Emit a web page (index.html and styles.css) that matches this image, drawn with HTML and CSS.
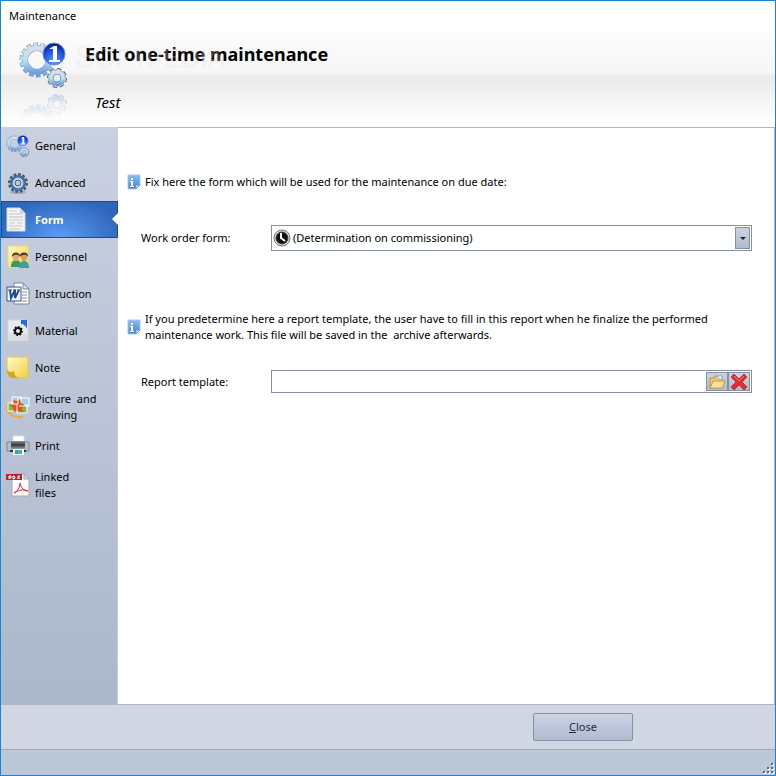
FILE: index.html
```html
<!DOCTYPE html>
<html lang="en">
<head>
  <meta charset="UTF-8" />
  <title>Maintenance</title>
  <link rel="stylesheet" href="styles.css">
</head>
<body>
  <!-- shared gradients and symbols -->
  <svg class="defs" width="0" height="0" aria-hidden="true">
    <defs>
      <linearGradient id="steel" x1="0" y1="0" x2="0" y2="1">
        <stop offset="0" stop-color="#d5deec"/>
        <stop offset=".55" stop-color="#b4e2f5"/>
        <stop offset="1" stop-color="#6fa2dc"/>
      </linearGradient>
      <radialGradient id="ball" cx=".5" cy=".85" r=".8">
        <stop offset="0" stop-color="#5a9cff"/>
        <stop offset=".6" stop-color="#2455e0"/>
        <stop offset="1" stop-color="#0a1fa8"/>
      </radialGradient>
      <linearGradient id="yellow" x1="0" y1="0" x2="1" y2="1">
        <stop offset="0" stop-color="#fffbc0"/>
        <stop offset="1" stop-color="#f2cf4a"/>
      </linearGradient>
      <linearGradient id="infoBlue" x1="0" y1="0" x2="0" y2="1">
        <stop offset="0" stop-color="#8dbcf5"/>
        <stop offset="1" stop-color="#3c82dc"/>
      </linearGradient>
      <linearGradient id="printer" x1="0" y1="0" x2="0" y2="1">
        <stop offset="0" stop-color="#8b9096"/>
        <stop offset=".5" stop-color="#34383d"/>
        <stop offset="1" stop-color="#9da2a8"/>
      </linearGradient>
      <symbol id="gears" viewBox="0 0 50 48">
        <circle cx="18" cy="19" r="15" fill="none" stroke="#7b90aa" stroke-width="5" pathLength="28" stroke-dasharray="1.3 .7"/>
        <circle cx="18" cy="19" r="12" fill="none" stroke="#7b90aa" stroke-width="6"/>
        <circle cx="18" cy="19" r="15" fill="none" stroke="url(#steel)" stroke-width="4" pathLength="28" stroke-dasharray="1 1" stroke-dashoffset="-.1"/>
        <circle cx="18" cy="19" r="12" fill="none" stroke="url(#steel)" stroke-width="5"/>
        <circle cx="38" cy="37" r="8" fill="none" stroke="#57687d" stroke-width="4" pathLength="16" stroke-dasharray="1.2 .8"/>
        <circle cx="38" cy="37" r="6" fill="none" stroke="#57687d" stroke-width="5"/>
        <circle cx="38" cy="37" r="7" fill="none" stroke="#c4d8ef" stroke-width="4" pathLength="16" stroke-dasharray="1 1" stroke-dashoffset="-.1"/>
        <circle cx="38" cy="37" r="6" fill="none" stroke="url(#steel)" stroke-width="4"/>
        <circle cx="35" cy="13" r="11" fill="url(#ball)" stroke="#6d8fe0" stroke-width="1"/>
        <path d="M30 8l5-3h3v14h3v2h-11v-2h4v-11h-4z" fill="#fff"/>
      </symbol>
      <symbol id="info" viewBox="0 0 14 16">
        <path d="M1 1h12v10l-4 4h-8z" fill="url(#infoBlue)" stroke="#aac8ee" stroke-width="1"/>
        <path d="M9 15v-4h4z" fill="#e8f2ff" stroke="#5b95dd" stroke-width="1"/>
        <path d="M4 4h2v2h-2zM3 7h3v5h1v1h-4v-1h1v-4h-1z" fill="#fff"/>
      </symbol>
    </defs>
  </svg>

  <div class="window">
    <div class="title-bar">Maintenance</div>

    <header class="banner">
      <div class="banner-icon">
        <svg class="gears" width="50" height="48"><use href="#gears"/></svg>
        <svg class="reflection" width="50" height="48"><use href="#gears"/></svg>
      </div>
      <div class="banner-text">
        <h1>Edit one-time maintenance</h1>
        <p>Test</p>
      </div>
      <span class="watermark"><big>S</big>OFTPEDIA<sup>®</sup></span>
    </header>

    <div class="middle">
      <nav class="sidebar">
        <a class="nav-item" href="#general">
          <svg width="24" height="24"><use href="#gears"/></svg>
          <span>General</span>
        </a>
        <a class="nav-item" href="#advanced">
          <svg width="24" height="24" viewBox="0 0 24 24">
            <ellipse cx="12" cy="21" rx="8" ry="2" fill="#7d899f" opacity=".5"/>
            <circle cx="12" cy="12" r="8" fill="none" stroke="#4b5969" stroke-width="4" pathLength="24" stroke-dasharray="1.2 .8"/>
            <circle cx="12" cy="12" r="8" fill="#5c6978"/>
            <circle cx="12" cy="12" r="6" fill="none" stroke="#2b78cc" stroke-width="2"/>
            <circle cx="12" cy="12" r="5" fill="#e4ebf2" stroke="#a3bfdb" stroke-width="1"/>
            <circle cx="12" cy="12" r="3" fill="#bcc7d8" stroke="#47525f" stroke-width="1"/>
          </svg>
          <span>Advanced</span>
        </a>
        <a class="nav-item active" href="#form">
          <svg width="24" height="26" viewBox="0 0 24 26">
            <path d="M1 1h13l5 5v18H1z" fill="#f4f4f2" stroke="#d4d8dd"/>
            <path d="M14 1v5h5z" fill="#cfd3d8"/>
            <path d="M3 4h8M3 7h14M3 13h14M3 16h6M11 16h6M3 19h14M3 22h11" stroke="#c3c7cb"/>
            <path d="M3 10h14" stroke="#d5d8dc" stroke-width="2"/>
          </svg>
          <span>Form</span>
        </a>
        <a class="nav-item" href="#personnel">
          <svg width="24" height="24" viewBox="0 0 24 24">
            <path d="M2 1h20v21H2z" fill="url(#yellow)" stroke="#e6d98c"/>
            <path d="M5 22c0-5 2-7 5-7s5 2 5 7z" fill="#3e9a5c"/>
            <ellipse cx="10" cy="12" rx="3" ry="4" fill="#e0a878"/>
            <path d="M6 12c-1-6 9-6 8 0-1-3-6-3-8 0z" fill="#5b3c22"/>
            <path d="M13 23c0-5 2-7 5-7s5 2 5 7z" fill="#3aa19c"/>
            <ellipse cx="18" cy="12" rx="3" ry="4" fill="#d99868"/>
            <path d="M14 12c-1-6 9-6 8 0-1-3-6-3-8 0z" fill="#4b3525"/>
          </svg>
          <span>Personnel</span>
        </a>
        <a class="nav-item" href="#instruction">
          <svg width="24" height="24" viewBox="0 0 24 24">
            <path d="M8 1h9l6 6v15H8z" fill="#fff" stroke="#7c838c"/>
            <path d="M17 1v6h6z" fill="#dde1e6" stroke="#7c838c"/>
            <path d="M16 10h5M16 13h5M16 16h5M16 19h5" stroke="#858c95"/>
            <path d="M1 5h14v14H1z" fill="#f5f8fd" stroke="#2b5797" stroke-width="1"/>
            <path d="M4 8l1 8 4-8v8l4-8" fill="none" stroke="#1f4c94" stroke-width="2"/>
            <path d="M2 8h4M7 8h3M11 8h3" stroke="#1f4c94"/>
          </svg>
          <span>Instruction</span>
        </a>
        <a class="nav-item" href="#material">
          <svg width="24" height="24" viewBox="0 0 24 24">
            <path d="M2 1h20v20H2z" fill="#e8eaed" stroke="#d3d7dd"/>
            <path d="M2 15h20v7H2z" fill="#d9dce0"/>
            <path d="M15 1h6v9c-1-3-3-5-6-5z" fill="#1d6fe0"/>
            <circle cx="12" cy="12" r="4" fill="none" stroke="#111" stroke-width="2" pathLength="16" stroke-dasharray="1 1"/>
            <circle cx="12" cy="12" r="3" fill="none" stroke="#111" stroke-width="2"/>
          </svg>
          <span>Material</span>
        </a>
        <a class="nav-item" href="#note">
          <svg width="24" height="24" viewBox="0 0 24 24">
            <path d="M1 1h21v21H10L1 14z" fill="url(#yellow)" stroke="#e3c64f"/>
            <path d="M1 14c2 3 5 2 7 1 0 3 1 5 4 7H6c-3-1-5-4-5-8z" fill="#d6a51c"/>
          </svg>
          <span>Note</span>
        </a>
        <a class="nav-item" href="#pictures">
          <svg width="24" height="24" viewBox="0 0 24 24">
            <path d="M1 9c-1 8 4 14 16 13" fill="none" stroke="#eea92c" stroke-width="2"/>
            <path d="M6 2h9v7H6zM14 3h9v8h-9z" fill="#9bd2ef" stroke="#fff"/>
            <path d="M2 8h9v8H2zM11 10h10v8H11z" fill="#7fb84b" stroke="#fff"/>
            <path d="M7 5l4 1 3-2 1 4 4 2-3 3 1 4-5-1-4 1-1-4-3-3 4-2z" fill="#e4531b"/>
            <path d="M12 3v6M11 9v8M5 9h7M13 11h8" stroke="#fff"/>
          </svg>
          <span>Picture&nbsp; and drawing</span>
        </a>
        <a class="nav-item" href="#print">
          <svg width="24" height="24" viewBox="0 0 24 24">
            <path d="M7 2h11v7H7z" fill="#fff" stroke="#d9dde2"/>
            <path d="M1 8h22v9H1z" fill="#b9bdc2" stroke="#80858b"/>
            <path d="M5 7h14v8H5z" fill="url(#printer)"/>
            <path d="M4 16h16v2H4z" fill="#33373b"/>
            <path d="M7 15h11v6H7z" fill="#f4f7fa"/>
            <path d="M9 16h3v4H9z" fill="#319bd0"/>
            <path d="M12 16h4v4h-4z" fill="#4bb59b"/>
          </svg>
          <span>Print</span>
        </a>
        <a class="nav-item" href="#files">
          <svg width="24" height="24" viewBox="0 0 24 24">
            <path d="M6 1h12l5 5v17H6z" fill="#fbfbfb" stroke="#a4a9b0"/>
            <path d="M18 1v5h5z" fill="#d4d7db" stroke="#a4a9b0"/>
            <path d="M0 1h16v6H0z" fill="#bf1f2e"/>
            <path d="M3 6V3h2v2H3M7 3v3h1l1-1V4L8 3zM12 6V3h2M12 5h2" fill="none" stroke="#fff"/>
            <path d="M8 20c3-1 6-6 6-10 1 5 4 8 8 8-5-2-9-1-14 2z" fill="none" stroke="#cc2936"/>
          </svg>
          <span>Linked<br>files</span>
        </a>
      </nav>

      <main class="content">
        <div class="hint">
          <svg width="14" height="16"><use href="#info"/></svg>
          <p>Fix here the form which will be used for the maintenance on due date:</p>
        </div>
        <div class="field order-field">
          <label for="orderForm">Work order form:</label>
          <div class="select-box">
            <svg class="clock" width="18" height="18" viewBox="0 0 18 18">
              <circle cx="9" cy="9" r="8" fill="#ddd" stroke="#777"/>
              <circle cx="9" cy="9" r="6" fill="#111" stroke="#444"/>
              <path d="M8 4v5l4 3" fill="none" stroke="#fff" stroke-width="2"/>
            </svg>
            <select id="orderForm">
              <option>(Determination on commissioning)</option>
            </select>
            <span class="arrow"></span>
          </div>
        </div>

        <div class="hint report-hint">
          <svg width="14" height="16"><use href="#info"/></svg>
          <p>If you predetermine here a report template, the user have to fill in this report when he finalize the performed maintenance work. This file will be saved in the&nbsp; archive afterwards.</p>
        </div>
        <div class="field">
          <label for="template">Report template:</label>
          <div class="file-box">
            <input type="text" id="template" />
            <button type="button" aria-label="Open">
              <svg width="18" height="16" viewBox="0 0 18 16">
                <path d="M2 14V4h4l1-2h7v11z" fill="#ecca74" stroke="#b8933f"/>
                <path d="M10 2h4v3h-4z" fill="#f8fbff" stroke="#9db6d0"/>
                <path d="M2 14l3-7h12l-3 7z" fill="#fbe298" stroke="#c39a3c"/>
              </svg>
            </button>
            <button type="button" aria-label="Delete">
              <svg width="18" height="18" viewBox="0 0 18 18">
                <path d="M4 1l5 5 5-5 3 3-5 5 5 5-3 3-5-5-5 5-3-3 5-5-5-5z" fill="#e82a2e" stroke="#b8383c"/>
                <path d="M4 3l5 5 5-5" fill="none" stroke="#ff8080"/>
              </svg>
            </button>
          </div>
        </div>
      </main>
    </div>

    <footer class="footer">
      <button type="button" class="close-button"><u>C</u>lose</button>
    </footer>
    <div class="status-bar">
      <svg width="12" height="12" viewBox="0 0 12 12">
        <path d="M9 1h2v2H9zM5 5h2v2H5zM9 5h2v2H9zM1 9h2v2H1zM5 9h2v2H5zM9 9h2v2H9z" fill="#fff"/>
        <path d="M8 0h2v2H8zM4 4h2v2H4zM8 4h2v2H8zM0 8h2v2H0zM4 8h2v2H4zM8 8h2v2H8z" fill="#5d6b85"/>
      </svg>
    </div>
  </div>
</body>
</html>
```

FILE: styles.css
```css
* { box-sizing: border-box; }
body {
  margin: 0;
  font-family: "Segoe UI", "Noto Sans", sans-serif;
  font-size: 11px;
  line-height: 16px;
  color: #000;
}
h1, p { margin: 0; }
svg { flex-shrink: 0; }
.defs { position: absolute; }
.window {
  display: flex;
  flex-direction: column;
  min-height: 100vh;
  border: 1px solid #1883d7;
  background: #fff;
}
.title-bar { padding: 7px 8px; }

/* banner */
.banner {
  position: relative;
  display: flex;
  height: 96px;
  padding: 10px 18px 0;
  gap: 16px;
  background: linear-gradient(#fcfcfc, #f6f6f6 42px, #ececec 45px, #ececec 50px, #fff 94px);
}
.banner-icon {
  display: flex;
  flex-direction: column;
  gap: 4px;
  height: 76px;
  overflow: hidden;
}
.reflection {
  transform: scaleY(-1);
  opacity: .35;
  -webkit-mask-image: linear-gradient(transparent 40%, #000);
  mask-image: linear-gradient(transparent 40%, #000);
}
.banner-text h1 {
  font-size: 18px;
  line-height: 26px;
}
.banner-text p {
  padding: 25px 10px 0;
  font-size: 15px;
  line-height: 20px;
  font-style: italic;
}
.watermark {
  position: absolute;
  left: 72px;
  top: 6px;
  font-family: "Liberation Sans", sans-serif;
  font-size: 26px;
  line-height: 32px;
  color: rgba(255, 255, 255, .25);
  text-shadow: 1px 1px 2px rgba(0, 0, 0, .05);
  pointer-events: none;
}
.watermark sup { font-size: 10px; }

/* sidebar */
.middle {
  flex-grow: 1;
  display: flex;
}
.sidebar {
  width: 117px;
  flex-shrink: 0;
  background: linear-gradient(#c9d1e1, #acb7cb);
  border-right: 1px solid #c3cddd;
}
.nav-item {
  display: flex;
  align-items: center;
  gap: 5px;
  min-height: 37px;
  padding: 5px 12px 4px 5px;
  color: #000;
  text-decoration: none;
}
.nav-item.active {
  position: relative;
  margin-right: -1px;
  padding: 4px 11px 4px 4px;
  border: 1px solid #1c4a94;
  background: radial-gradient(ellipse at 50% 100%, #5b9bf5, #2f66ba 80%);
  color: #fff;
  font-weight: bold;
}
.nav-item.active::after {
  content: "";
  position: absolute;
  right: -1px;
  top: 11px;
  border: 6px solid transparent;
  border-left-width: 0;
  border-right-color: #fff;
}

/* content */
.content {
  flex-grow: 1;
  padding: 46px 22px 0 9px;
  border: 1px solid #abb9ca;
  border-left: none;
}
.hint {
  display: flex;
  align-items: center;
  gap: 4px;
}
.hint p { max-width: 580px; }
.field {
  display: flex;
  align-items: center;
  margin-top: 27px;
  padding-left: 14px;
}
.order-field { margin-top: 35px; }
.report-hint { margin-top: 60px; }
.field label { width: 130px; }
.select-box {
  position: relative;
  flex-grow: 1;
}
.select-box select {
  display: block;
  width: 100%;
  height: 26px;
  padding: 0 20px 0 21px;
  border: 1px solid #8590a5;
  border-radius: 0;
  background: #fff;
  font: inherit;
  color: #000;
  appearance: none;
}
.clock {
  position: absolute;
  left: 2px;
  top: 4px;
}
.arrow {
  position: absolute;
  right: 2px;
  top: 2px;
  width: 15px;
  height: 22px;
  border: 1px solid #8590a5;
  background: linear-gradient(#cbd3e2, #b0bbd0);
  pointer-events: none;
}
.arrow::after {
  content: "";
  position: absolute;
  left: 4px;
  top: 9px;
  border: 3px solid transparent;
  border-top-color: #1b2436;
  border-bottom-width: 0;
}
.file-box {
  flex-grow: 1;
  display: flex;
  height: 23px;
  padding: 1px;
  border: 1px solid #8590a5;
}
.file-box input {
  flex-grow: 1;
  min-width: 0;
  border: none;
  font: inherit;
}
.file-box button {
  display: flex;
  align-items: center;
  justify-content: center;
  width: 22px;
  padding: 0;
  border: 1px solid #8590a5;
  background: linear-gradient(#cbd3e2, #b0bbd0);
}

/* footer */
.footer {
  display: flex;
  justify-content: flex-end;
  height: 44px;
  padding: 8px 142px;
  background: #d0d6e2;
}
.close-button {
  width: 100px;
  height: 28px;
  border: 1px solid #8491aa;
  border-radius: 2px;
  background: linear-gradient(#cbd3e3, #b0bbd0);
  font: inherit;
  color: #1e2a42;
}
.status-bar {
  display: flex;
  align-items: flex-end;
  justify-content: flex-end;
  height: 26px;
  border-top: 1px solid #9aaac0;
  background: #bcc7d8;
}
```
